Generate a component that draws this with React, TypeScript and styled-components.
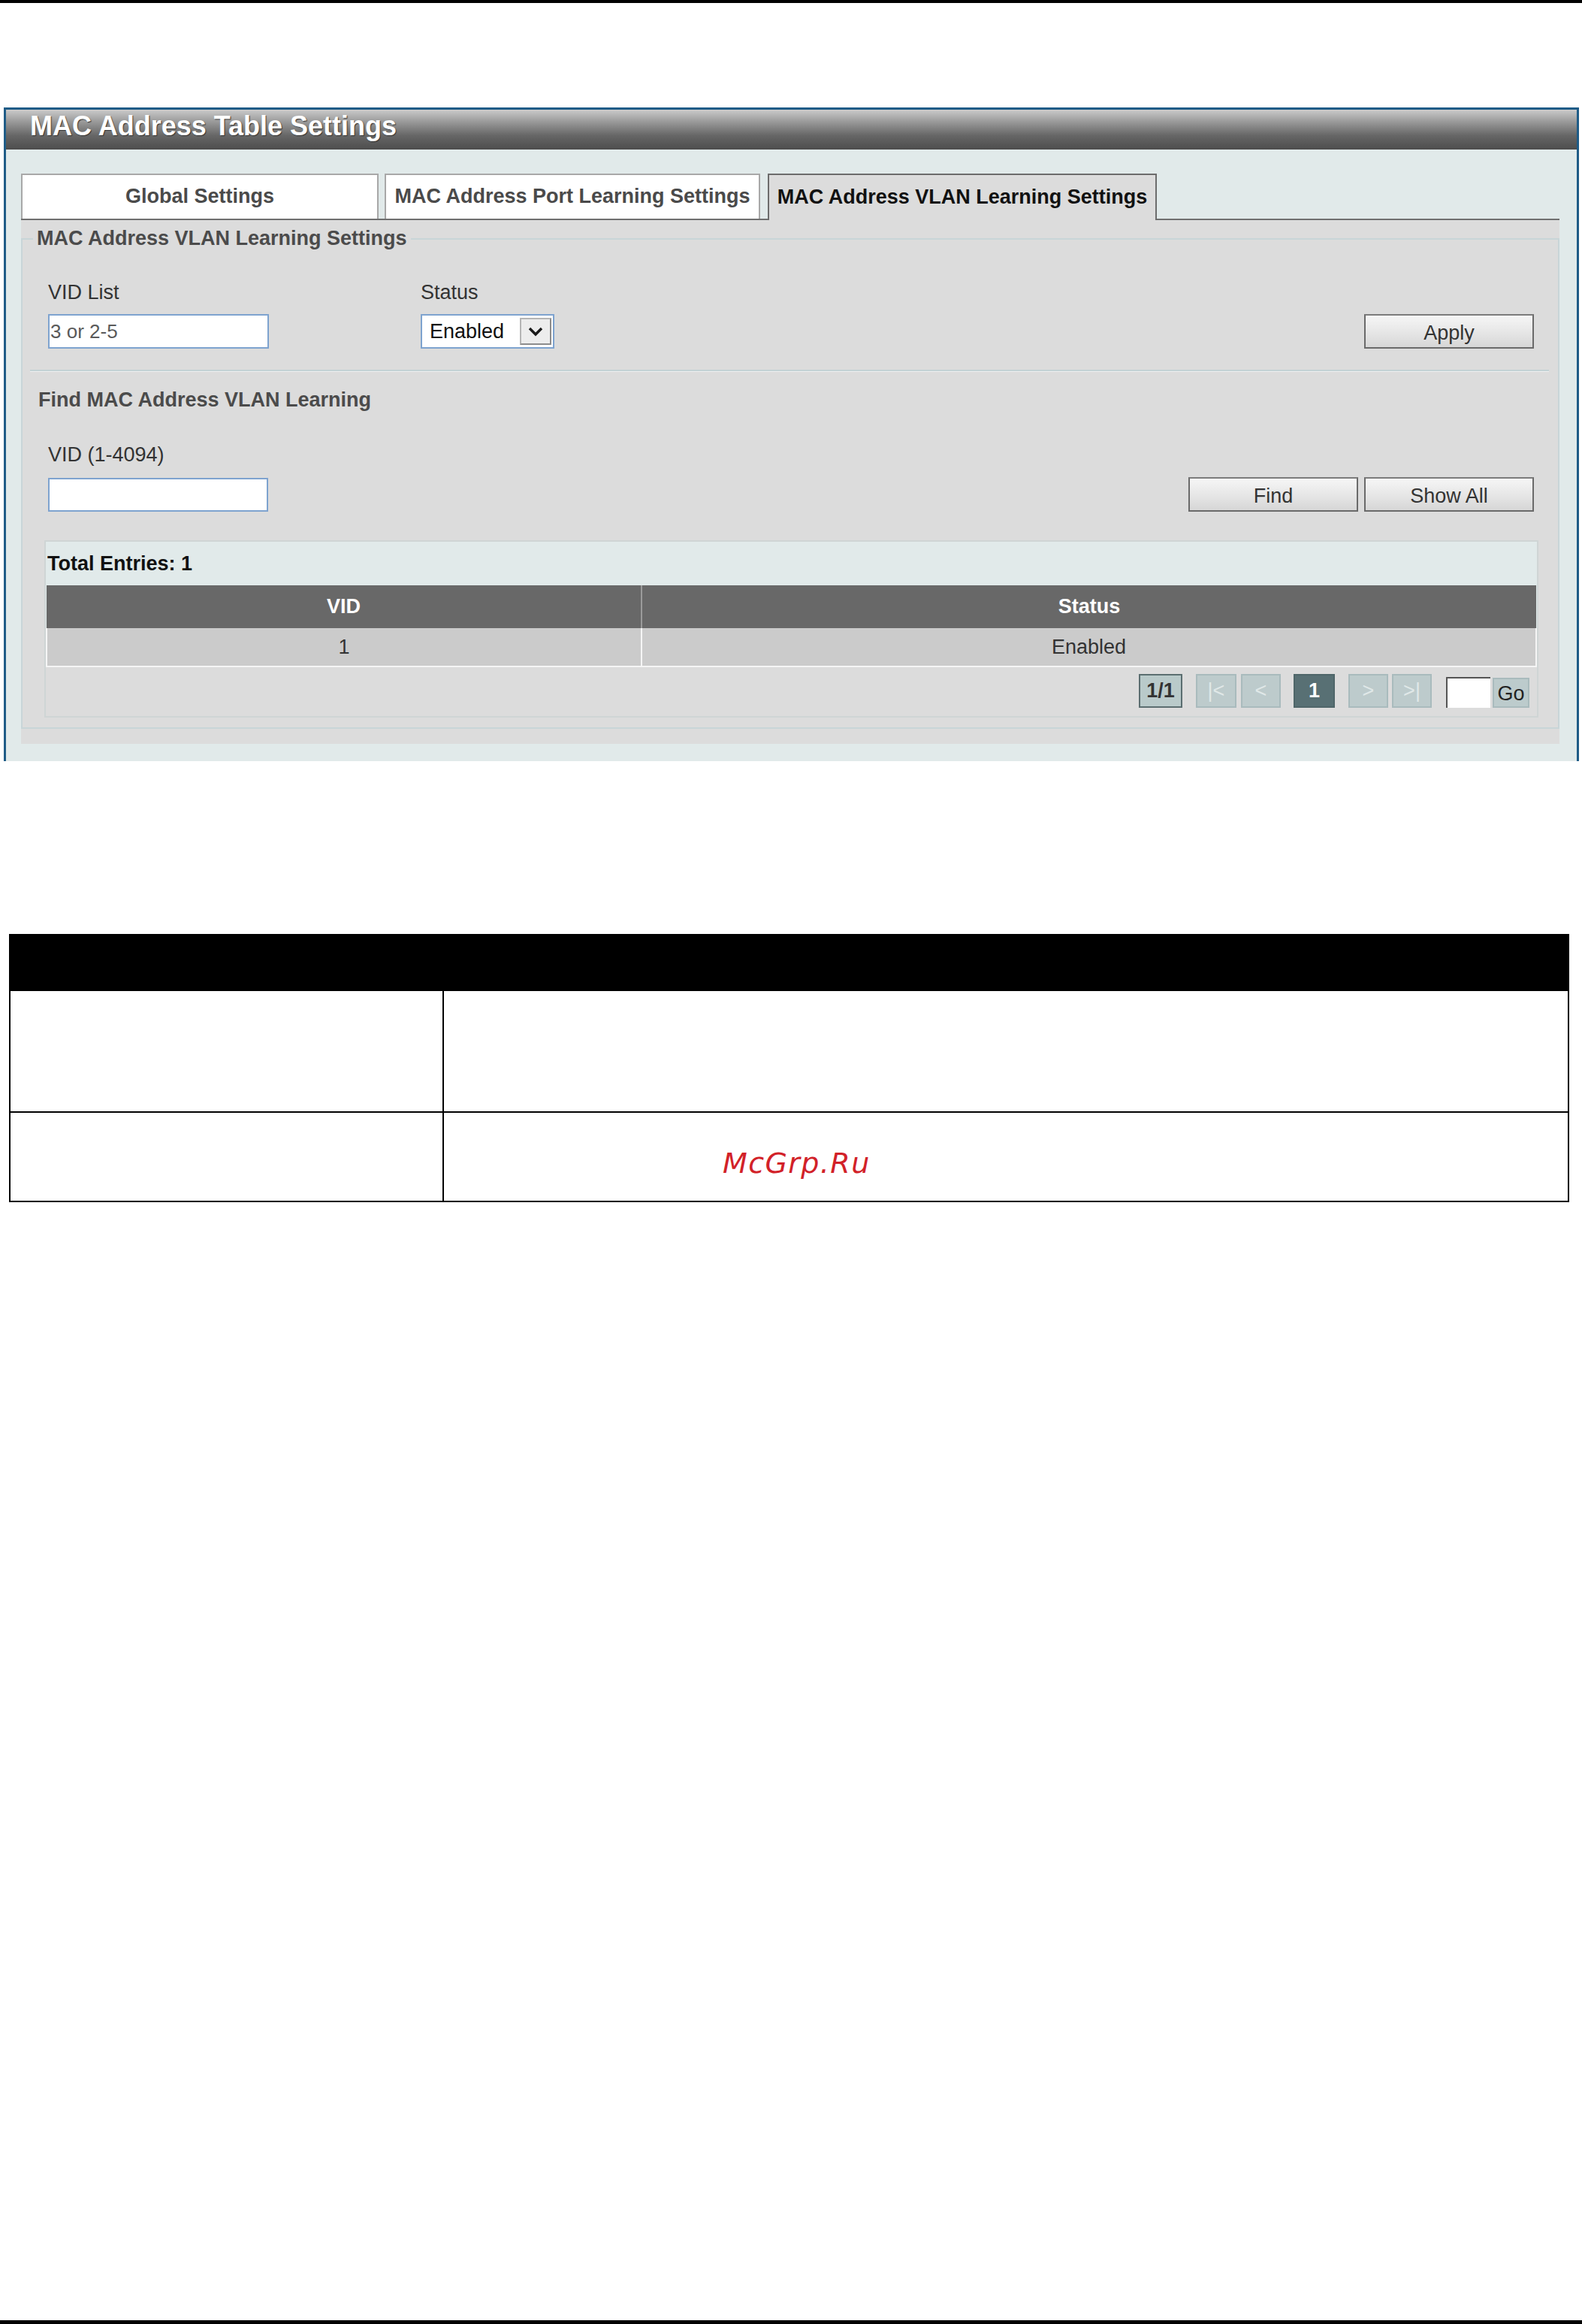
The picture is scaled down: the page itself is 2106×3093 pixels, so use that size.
import React from 'react';
import styled, { createGlobalStyle } from 'styled-components';

const Global = createGlobalStyle`
  html, body { margin: 0; padding: 0; background: #fff; }
  body { font-family: "Liberation Sans", Arial, sans-serif; }
  * { box-sizing: border-box; }
`;

const Page = styled.div`
  width: 2106px;
  height: 3093px;
  border-top: 4px solid #000;
  border-bottom: 5px solid #000;
  display: flex;
  flex-direction: column;
`;

const Panel = styled.section`
  margin: 139px 0 0 5px;
  width: 2097px;
  border: 3px solid #1f5c87;
  border-bottom: none;
`;

const TitleBar = styled.div`
  height: 53px;
  padding-left: 32px;
  background: linear-gradient(#cbcbcb 0%, #9a9a9a 30%, #666 65%, #4d4d4d 100%);
  color: #fff;
  font-weight: bold;
  font-size: 36px;
  line-height: 43px;
  text-shadow: 1px 1px 1px #333;
`;

const PanelBody = styled.div`
  background: #e1eaea;
  padding: 32px 23px 23px 20px;
`;

const TabBar = styled.div`
  display: flex;
  height: 62px;
  border-bottom: 2px solid #6f6f6f;
`;

const Tab = styled.div<{ $w: number; $active?: boolean; $gap: number }>`
  width: ${p => p.$w}px;
  margin-right: ${p => p.$gap}px;
  height: ${p => (p.$active ? 62 : 60)}px;
  margin-bottom: ${p => (p.$active ? -2 : 0)}px;
  background: ${p => (p.$active ? '#dcdcdc' : '#fff')};
  border: 2px solid ${p => (p.$active ? '#6c6c6c' : '#a8a8a8')};
  border-bottom: none;
  display: flex;
  align-items: center;
  justify-content: center;
  font-size: 27px;
  font-weight: bold;
  color: ${p => (p.$active ? '#111' : '#4a4a4a')};
  padding-bottom: 2px;
  white-space: nowrap;
`;

const TabContent = styled.div`
  background: #dcdcdc;
  padding: 9px 0 20px 0;
`;

const Fieldset = styled.fieldset`
  margin: 0;
  padding: 0 0 13px 0;
  border: 2px solid #c8d5d8;
  min-width: 0;
`;

const Legend = styled.legend`
  margin-left: 14px;
  padding: 0 5px;
  font-size: 27px;
  line-height: 31px;
  font-weight: bold;
  color: #4b4b4b;
`;

const FormRow = styled.div<{ $top: number }>`
  display: flex;
  align-items: flex-end;
  margin-top: ${p => p.$top}px;
  padding: 0 32px 0 34px;
`;

const Field = styled.div<{ $w?: number }>`
  display: flex;
  flex-direction: column;
  gap: 13px;
  width: ${p => (p.$w ? `${p.$w}px` : 'auto')};
`;

const Label = styled.div`
  font-size: 27px;
  line-height: 31px;
  color: #333;
`;

const TextInput = styled.div<{ $w: number; $h: number }>`
  width: ${p => p.$w}px;
  height: ${p => p.$h}px;
  background: #fff;
  border: 2px solid #7ea3cf;
  font-size: 26px;
  line-height: ${p => p.$h - 4}px;
  color: #5a5a5a;
  padding-left: 1px;
`;

const SelectBox = styled.div`
  width: 178px;
  height: 46px;
  background: #fff;
  border: 2px solid #7ea3cf;
  display: flex;
  align-items: center;
  padding: 0 2px 0 10px;
  font-size: 27px;
  color: #111;
`;

const SelectText = styled.span`
  flex: 1;
`;

const ArrowBox = styled.div`
  width: 42px;
  height: 36px;
  background: #ededed;
  border: 2px solid #8c8c8c;
  border-top-color: #b5b5b5;
  border-left-color: #b5b5b5;
  display: flex;
  align-items: center;
  justify-content: center;
`;

const Button = styled.div<{ $ml?: string }>`
  width: 226px;
  height: 46px;
  margin-left: ${p => p.$ml || '0'};
  border: 2px solid #6a6a6a;
  border-top-color: #7c7c7c;
  background: linear-gradient(#f6f6f6, #e4e4e4 60%, #d6d6d6);
  font-size: 27px;
  color: #333;
  display: flex;
  align-items: center;
  justify-content: center;
  padding-top: 4px;
`;

const Divider = styled.div`
  margin: 28px 12px 0 10px;
  border-top: 2px solid #c3d2d5;
  border-bottom: 1px solid #eef0f0;
`;

const SubHeading = styled.div`
  margin: 22px 0 0 21px;
  font-size: 27px;
  line-height: 31px;
  font-weight: bold;
  color: #4b4b4b;
`;

const PlainLabel = styled(Label)`
  margin: 42px 0 0 34px;
`;

const TableBox = styled.div`
  margin: 38px 26px 0 29px;
  border: 2px solid #cfd5d5;
  background: #e1eaea;
`;

const TotalRow = styled.div`
  height: 58px;
  display: flex;
  align-items: center;
  padding-left: 2px;
  font-size: 27px;
  font-weight: bold;
  color: #111;
`;

const DataTable = styled.table`
  width: 100%;
  border-collapse: collapse;
  table-layout: fixed;
`;

const Th = styled.th<{ $w?: number }>`
  width: ${p => (p.$w ? `${p.$w}px` : 'auto')};
  height: 57px;
  background: #686868;
  color: #fff;
  font-size: 27px;
  font-weight: bold;
  padding: 0;
  border-left: 2px solid #9a9a9a;
  &:first-child { border-left: none; }
`;

const Td = styled.td`
  height: 51px;
  background: #cbcbcb;
  color: #333;
  font-size: 27px;
  text-align: center;
  padding: 0;
  border: 2px solid #f5f5f5;
  border-top: none;
`;

const Pager = styled.div`
  height: 65px;
  background: #dcdcdc;
  display: flex;
  justify-content: flex-end;
  align-items: flex-start;
  padding: 9px 10px 0 0;
`;

const PageBtn = styled.div<{ $kind: 'info' | 'off' | 'current'; $w: number; $ml: number }>`
  width: ${p => p.$w}px;
  height: 45px;
  margin-left: ${p => p.$ml}px;
  display: flex;
  align-items: center;
  justify-content: center;
  font-size: 27px;
  background: ${p => (p.$kind === 'current' ? '#587074' : p.$kind === 'info' ? '#b9caca' : '#bdcbcc')};
  border: 2px solid ${p => (p.$kind === 'current' ? '#4f6669' : p.$kind === 'info' ? '#5b6e70' : '#a9bbbd')};
  color: ${p => (p.$kind === 'current' ? '#fff' : p.$kind === 'info' ? '#333' : '#e0e8e8')};
  font-weight: ${p => (p.$kind === 'off' ? 'normal' : 'bold')};
`;

const GoInput = styled.div`
  width: 59px;
  height: 41px;
  margin: 4px 0 0 19px;
  background: #fff;
  border-top: 2px solid #555;
  border-left: 2px solid #555;
`;

const GoBtn = styled.div`
  width: 49px;
  height: 40px;
  margin: 5px 0 0 3px;
  background: #bccbcc;
  border: 2px solid #a9bbbd;
  color: #222;
  font-size: 27px;
  display: flex;
  align-items: flex-end;
  justify-content: center;
  padding-bottom: 1px;
`;

const DocTable = styled.table`
  margin: 230px 0 0 12px;
  width: 2077px;
  border-collapse: collapse;
  table-layout: fixed;
`;

const DocTh = styled.th<{ $w?: number }>`
  width: ${p => (p.$w ? `${p.$w}px` : 'auto')};
  height: 74px;
  background: #000;
  border: 2px solid #000;
  padding: 0;
`;

const DocTd = styled.td<{ $h: number }>`
  height: ${p => p.$h}px;
  border: 2px solid #000;
  padding: 0;
  vertical-align: top;
`;

const Watermark = styled.div`
  padding: 45px 0 0 371px;
  font-family: "DejaVu Sans", Verdana, sans-serif;
  font-style: italic;
  font-size: 38px;
  line-height: 44px;
  letter-spacing: 1.4px;
  color: #d22128;
`;

const Chevron = () => (
  <svg width="22" height="14" viewBox="0 0 22 14">
    <polyline points="3,3 11,11 19,3" fill="none" stroke="#1a1a1a" strokeWidth="3.4" />
  </svg>
);

export default function App() {
  return (
    <>
      <Global />
      <Page>
        <Panel>
          <TitleBar>MAC Address Table Settings</TitleBar>
          <PanelBody>
            <TabBar>
              <Tab $w={476} $gap={8}>Global Settings</Tab>
              <Tab $w={500} $gap={10}>MAC Address Port Learning Settings</Tab>
              <Tab $w={518} $gap={0} $active>MAC Address VLAN Learning Settings</Tab>
            </TabBar>
            <TabContent>
              <Fieldset>
                <Legend>MAC Address VLAN Learning Settings</Legend>
                <FormRow $top={41}>
                  <Field $w={496}>
                    <Label>VID List</Label>
                    <TextInput $w={294} $h={46}>3 or 2-5</TextInput>
                  </Field>
                  <Field>
                    <Label>Status</Label>
                    <SelectBox>
                      <SelectText>Enabled</SelectText>
                      <ArrowBox>
                        <Chevron />
                      </ArrowBox>
                    </SelectBox>
                  </Field>
                  <Button $ml="auto">Apply</Button>
                </FormRow>
                <Divider />
                <SubHeading>Find MAC Address VLAN Learning</SubHeading>
                <PlainLabel>VID (1-4094)</PlainLabel>
                <FormRow $top={14}>
                  <TextInput $w={293} $h={45} />
                  <Button $ml="auto">Find</Button>
                  <Button $ml="8px">Show All</Button>
                </FormRow>
                <TableBox>
                  <TotalRow>Total Entries: 1</TotalRow>
                  <DataTable>
                    <thead>
                      <tr>
                        <Th $w={792}>VID</Th>
                        <Th>Status</Th>
                      </tr>
                    </thead>
                    <tbody>
                      <tr>
                        <Td>1</Td>
                        <Td>Enabled</Td>
                      </tr>
                    </tbody>
                  </DataTable>
                  <Pager>
                    <PageBtn $kind="info" $w={58} $ml={0}>1/1</PageBtn>
                    <PageBtn $kind="off" $w={54} $ml={18}>|&lt;</PageBtn>
                    <PageBtn $kind="off" $w={53} $ml={6}>&lt;</PageBtn>
                    <PageBtn $kind="current" $w={55} $ml={17}>1</PageBtn>
                    <PageBtn $kind="off" $w={53} $ml={18}>&gt;</PageBtn>
                    <PageBtn $kind="off" $w={53} $ml={5}>&gt;|</PageBtn>
                    <GoInput />
                    <GoBtn>Go</GoBtn>
                  </Pager>
                </TableBox>
              </Fieldset>
            </TabContent>
          </PanelBody>
        </Panel>
        <DocTable>
          <thead>
            <tr>
              <DocTh $w={577} />
              <DocTh />
            </tr>
          </thead>
          <tbody>
            <tr>
              <DocTd $h={162} />
              <DocTd $h={162} />
            </tr>
            <tr>
              <DocTd $h={119} />
              <DocTd $h={119}>
                <Watermark>McGrp.Ru</Watermark>
              </DocTd>
            </tr>
          </tbody>
        </DocTable>
      </Page>
    </>
  );
}
